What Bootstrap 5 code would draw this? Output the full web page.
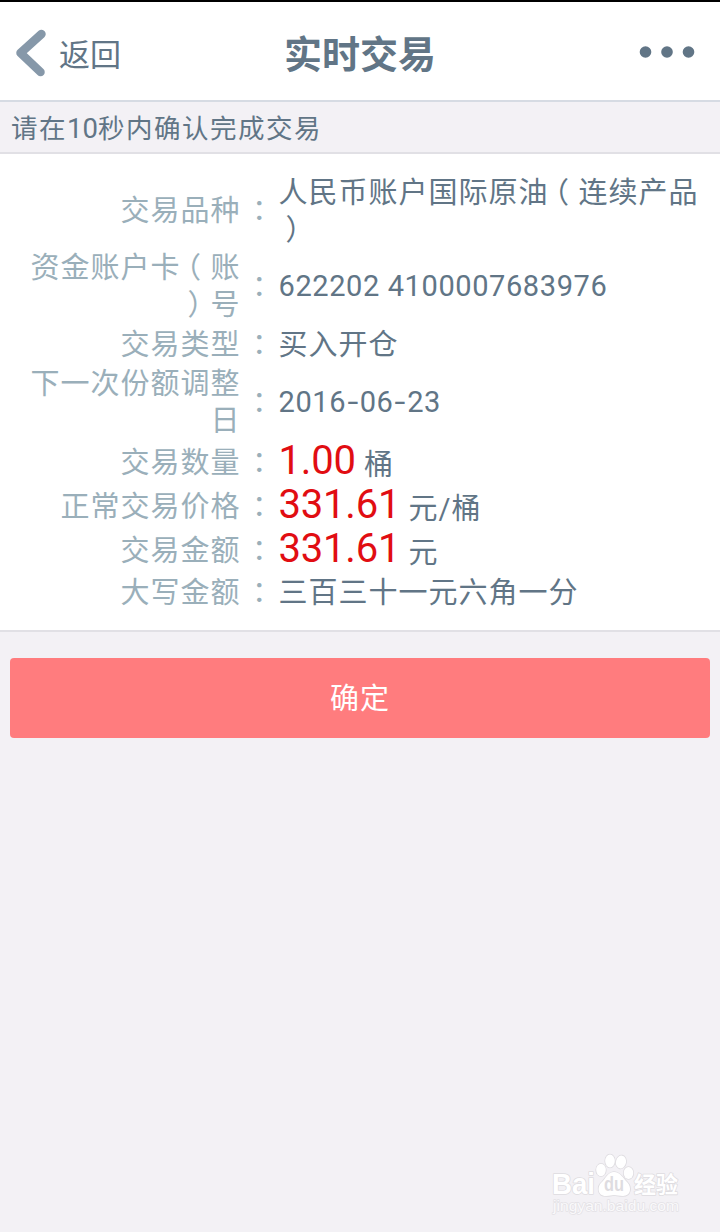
<!DOCTYPE html>
<html lang="zh-CN">
<head>
<meta charset="utf-8">
<meta name="viewport" content="width=device-width, initial-scale=1">
<title>实时交易</title>
<link href="https://cdn.jsdelivr.net/npm/bootstrap@5.3.0/dist/css/bootstrap.min.css" rel="stylesheet">
<style>
  body { background: #f3f1f5; color: #617586; font-family: Roboto, "Noto Sans CJK SC", sans-serif; min-height: 1232px; }
  .topbar { height: 102px; border-top: 2px solid #000; border-bottom: 2px solid #d6dbe3; }
  .topbar > * { flex: 1 1 0; }
  .back { font-size: 31px; line-height: 40px; color: inherit; }
  .back span { padding-top: 9px; }
  .title { font-size: 38px; line-height: 44px; font-weight: 700; padding-top: 8px; }
  .notice { height: 52px; font-size: 26.5px; letter-spacing: 1.5px; line-height: 54px; padding-left: 11px; border-bottom: 2px solid #e1e0e5; }
  .notice .digits { font-size: 27.5px; letter-spacing: 0; }
  .details { height: 478px; padding-top: 18px; border-bottom: 2px solid #e1e0e5; font-size: 29px; line-height: 37px; letter-spacing: 1px; }
  .entry { height: 40px; }
  .entry.tall { height: 76px; }
  .entry.priced { height: 44px; }
  .entry dt { width: 240.5px; padding-top: 2px; color: #9aafba; font-weight: 400; }
  .colon { width: 37.5px; padding: 0 0 0 11.5px; color: #9aafba; line-height: 1; font-feature-settings: "halt"; }
  .entry dd { width: 442px; white-space: nowrap; padding-left: .5px; }
  .entry .words { padding-top: 3px; }
  .open-paren, .close-paren { display: inline-block; line-height: 1; font-feature-settings: "halt"; margin: 0 8.5px 0 6px; }
  .close-paren { margin: 0 7.5px 0 7px; }
  .digits { letter-spacing: .6px; }
  .dash { display: inline-block; transform: scaleX(1.35); margin: 0 2.5px; }
  .amount { font-size: 40px; letter-spacing: -.2px; color: #e10d12; line-height: 40px; }
  .unit { position: relative; top: 1px; }
  .confirm { height: 80px; margin: 26px 10px 0; border-radius: 4px; background: #ff7c7e; color: #fff; font-size: 29px; letter-spacing: 1px; }
  .confirm span { display: inline-block; padding-top: 3px; }
  .watermark { position: absolute; left: 546px; top: 1148px; }
</style>
</head>
<body class="position-relative">
<header class="topbar bg-white d-flex align-items-center">
  <a class="back d-flex align-items-center text-decoration-none" href="#">
    <svg width="59" height="60" viewBox="0 0 59 60" fill="none" stroke="#8698a9" stroke-width="8.5" stroke-linecap="round" stroke-linejoin="round"><path d="M41.5 13 20.500 32 40.500 51"/></svg>
    <span>返回</span>
  </a>
  <h1 class="title text-center mb-0">实时交易</h1>
  <div class="text-end">
    <svg width="81" height="20" viewBox="0 0 81 20" fill="#617586"><circle cx="6.5" cy="10" r="5.8"/><circle cx="28" cy="10" r="5.8"/><circle cx="49.5" cy="10" r="5.8"/></svg>
  </div>
</header>
<div class="notice">请在<span class="digits">10</span>秒内确认完成交易</div>
<main>
  <dl class="details bg-white mb-0">
    <div class="entry tall d-flex align-items-center"><dt class="text-end">交易品种</dt><span class="colon">：</span><dd class="mb-0 words">人民币账户国际原油<span class="open-paren">（</span>连续产品<br><span class="close-paren">）</span></dd></div>
    <div class="entry tall d-flex align-items-center"><dt class="text-end">资金账户卡<span class="open-paren">（</span>账<br><span class="close-paren">）</span>号</dt><span class="colon">：</span><dd class="mb-0 digits">622202 4100007683976</dd></div>
    <div class="entry d-flex align-items-center"><dt class="text-end">交易类型</dt><span class="colon">：</span><dd class="mb-0 words">买入开仓</dd></div>
    <div class="entry tall d-flex align-items-center"><dt class="text-end">下一次份额调整<br>日</dt><span class="colon">：</span><dd class="mb-0 digits">2016<span class="dash">-</span>06<span class="dash">-</span>23</dd></div>
    <div class="entry priced d-flex align-items-center"><dt class="text-end">交易数量</dt><span class="colon">：</span><dd class="mb-0"><span class="amount">1.00</span> <span class="unit">桶</span></dd></div>
    <div class="entry priced d-flex align-items-center"><dt class="text-end">正常交易价格</dt><span class="colon">：</span><dd class="mb-0"><span class="amount">331.61</span> <span class="unit">元/桶</span></dd></div>
    <div class="entry priced d-flex align-items-center"><dt class="text-end">交易金额</dt><span class="colon">：</span><dd class="mb-0"><span class="amount">331.61</span> <span class="unit">元</span></dd></div>
    <div class="entry d-flex align-items-center"><dt class="text-end">大写金额</dt><span class="colon">：</span><dd class="mb-0 words">三百三十一元六角一分</dd></div>
  </dl>
  <div class="d-grid"><button type="button" class="btn confirm p-0"><span>确定</span></button></div>
</main>
<svg class="watermark" width="142" height="72" viewBox="0 0 142 72" fill="#fff" stroke="#dedce0" stroke-width="1.6" paint-order="stroke" stroke-linejoin="round" font-family="'Liberation Sans', sans-serif">
  <text x="6" y="46" font-size="29" font-weight="700" textLength="43" lengthAdjust="spacingAndGlyphs">Bai</text>
  <ellipse cx="55" cy="22" rx="4.8" ry="6.2"/><ellipse cx="64" cy="13" rx="4.8" ry="6.5"/><ellipse cx="75" cy="14" rx="5" ry="6.5" transform="rotate(12 75 14)"/><ellipse cx="82.500" cy="25" rx="4.800" ry="6"/>
  <path d="M68 24c-6 0-8 6-12 10-5 4-5 14 4 14 4 0 6-1 8-1s5 1 9 1c8 0 9-9 4-14-4-4-7-10-13-10z"/>
  <text x="58" y="43" font-size="20" font-weight="700" fill="#dedce0" stroke="none" textLength="20" lengthAdjust="spacingAndGlyphs">du</text>
  <text x="88" y="45" font-size="23" font-weight="700" font-family="'Noto Sans CJK SC', sans-serif" textLength="44" lengthAdjust="spacingAndGlyphs">经验</text>
  <text x="7" y="63" font-size="15" fill="#faf9fb" stroke="#e3e1e5" stroke-width="1.4" textLength="126" lengthAdjust="spacingAndGlyphs">jingyan.baidu.com</text>
</svg>
<script src="https://cdn.jsdelivr.net/npm/bootstrap@5.3.0/dist/js/bootstrap.bundle.min.js"></script>
</body>
</html>
